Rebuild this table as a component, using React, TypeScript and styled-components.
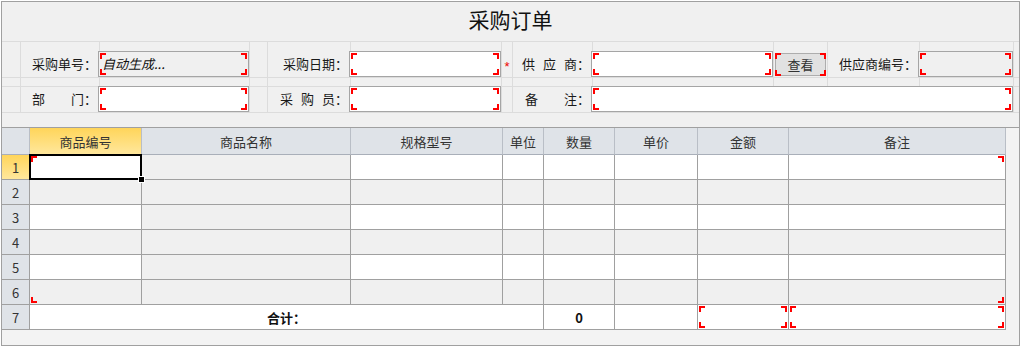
import React from 'react'
import styled, { createGlobalStyle, css } from 'styled-components'

const GlobalStyle = createGlobalStyle`
  html, body { margin: 0; padding: 0; background: #fff; }
  body {
    font-family: "Noto Sans CJK SC", "Liberation Sans", sans-serif;
    font-size: 13px;
    color: #1a1a1a;
  }
  * { box-sizing: border-box; }
`

type Corner = 'tl' | 'tr' | 'bl' | 'br'
const ALL: Corner[] = ['tl', 'tr', 'bl', 'br']
const RED = 'linear-gradient(#f00, #f00)'

// red "required" brackets drawn as background layers
const brackets = (list: Corner[], inset: number, arm: number) =>
  list.flatMap(c => {
    const at = `${c[1] === 'l' ? 'left' : 'right'} ${inset}px ${c[0] === 't' ? 'top' : 'bottom'} ${inset}px`
    return [`${RED} ${at} / ${arm}px 2px no-repeat`, `${RED} ${at} / 2px ${arm}px no-repeat`]
  })

const paint = (bg: string, list?: Corner[], inset = 1, arm = 6) =>
  [...(list ? brackets(list, inset, arm) : []), bg].join(', ')

const Panel = styled.div`
  margin: 1px 0 0 1px;
  width: 1019px;
  height: 345px;
  border: 1px solid #a0a0a0;
  background: #f0f0f0;
  display: flex;
  flex-direction: column;
`

const Title = styled.h1`
  margin: 0;
  height: 39px;
  line-height: 35px;
  text-align: center;
  font-size: 21px;
  font-weight: normal;
  color: #111;
`

/* ---------- header form ---------- */

const FormGrid = styled.div`
  display: grid;
  grid-template-columns: 18px 79px 150px 18px 83px 151px 11px 80px 181px 54px 92px 94px 1fr;
  grid-template-rows: 36px 9px 27px;
  margin-bottom: 14px;
`

const Cell = styled.div<{ $first?: boolean; $last?: boolean; $span?: number }>`
  display: flex;
  align-items: flex-end;
  justify-content: flex-end;
  min-width: 0;
  grid-column: span ${p => p.$span ?? 1};
  border-top: 1px solid #dcdcdc;
  border-left: ${p => (p.$first ? 'none' : '1px solid #dcdcdc')};
  border-bottom: ${p => (p.$last ? '1px solid #dcdcdc' : 'none')};
`

const Label = styled.span`
  width: 100%;
  height: 26px;
  line-height: 26px;
  padding-right: 2px;
  text-align: right;
  white-space: nowrap;
  color: #1a1a1a;
`

const Spread = styled.span`
  letter-spacing: 8px;
`

const Field = styled.div<{ $readOnly?: boolean }>`
  position: relative;
  z-index: 1;
  flex: none;
  width: calc(100% + 2px);
  margin-left: -1px;
  height: 26px;
  padding: 0 3px;
  line-height: 24px;
  border: 1px solid #a5a5a5;
  background: ${p => paint(p.$readOnly ? '#f0f0f0' : '#fff', ALL)};
`

const Hint = styled.span`
  font-style: italic;
  color: #111;
`

const Required = styled.span`
  width: 100%;
  margin-bottom: 4px;
  text-align: center;
  color: #e00;
  font: 13px/13px "Liberation Sans", sans-serif;
`

const LookupButton = styled.button`
  position: relative;
  flex: none;
  width: 51px;
  height: 23px;
  margin: 0 1px 1px 0;
  padding: 0;
  border: 1px solid #adadad;
  background: #e1e1e1;
  font: inherit;
  line-height: 21px;
  color: #333;
  &::after {
    content: '';
    position: absolute;
    inset: -1px;
    background: ${paint('transparent', ALL, 0)};
  }
`

const blankRow = (key: string, last = false) =>
  Array.from({ length: 13 }, (_, i) => <Cell key={`${key}${i}`} $first={i === 0} $last={last} />)

const OrderForm: React.FC = () => (
  <FormGrid>
    <Cell $first />
    <Cell><Label>采购单号：</Label></Cell>
    <Cell><Field $readOnly><Hint>自动生成...</Hint></Field></Cell>
    <Cell />
    <Cell><Label>采购日期：</Label></Cell>
    <Cell><Field /></Cell>
    <Cell><Required>*</Required></Cell>
    <Cell><Label><Spread>供应</Spread>商：</Label></Cell>
    <Cell><Field /></Cell>
    <Cell><LookupButton>查看</LookupButton></Cell>
    <Cell><Label>供应商编号：</Label></Cell>
    <Cell><Field $readOnly /></Cell>
    <Cell />

    {blankRow('gap')}

    <Cell $first $last />
    <Cell $last><Label>部　　门：</Label></Cell>
    <Cell $last><Field /></Cell>
    <Cell $last />
    <Cell $last><Label><Spread>采购</Spread>员：</Label></Cell>
    <Cell $last><Field /></Cell>
    <Cell $last />
    <Cell $last><Label>备　　注：</Label></Cell>
    <Cell $last $span={4}><Field /></Cell>
    <Cell $last />
  </FormGrid>
)

/* ---------- goods sheet ---------- */

const Sheet = styled.div`
  flex: 1;
  border-top: 1px solid #a0a0a0;
  background: #f3f3f3;
`

const SheetGrid = styled.div`
  display: grid;
  grid-template-columns: 28px 112px 209px 152px 41px 71px 83px 91px 217px;
  grid-template-rows: 27px repeat(7, 25px);
  width: max-content;
`

const ACTIVE = 'linear-gradient(#ffd55a, #ffe79c)'

const HeadCell = styled.div<{ $active?: boolean }>`
  display: flex;
  align-items: center;
  justify-content: center;
  border-right: 1px solid #b9bec6;
  border-bottom: 1px solid #a9afb9;
  background: ${p => (p.$active ? ACTIVE : '#dfe3e8')};
  color: #333;
`

const RowHead = styled.div<{ $active?: boolean }>`
  display: flex;
  align-items: center;
  justify-content: center;
  border-right: 1px solid #a0a0a0;
  border-bottom: 1px solid #a0a0a0;
  background: ${p => (p.$active ? ACTIVE : '#dfe3e8')};
  color: #333;
`

const DataCell = styled.div<{ $bg: string; $corners?: Corner[]; $span?: number; $bold?: boolean; $selected?: boolean }>`
  position: relative;
  display: flex;
  align-items: center;
  justify-content: center;
  grid-column: span ${p => p.$span ?? 1};
  border-right: 1px solid #a0a0a0;
  border-bottom: 1px solid #a0a0a0;
  background: ${p => paint(p.$bg, p.$corners)};
  font-weight: ${p => (p.$bold ? 'bold' : 'normal')};
  color: #111;
  ${p =>
    p.$selected &&
    css`
      z-index: 2;
      &::before {
        content: '';
        position: absolute;
        inset: -1px;
        border: 2px solid #000;
      }
      &::after {
        content: '';
        position: absolute;
        right: -3px;
        bottom: -3px;
        width: 5px;
        height: 5px;
        background: #000;
        box-shadow: 0 0 0 1px #fff;
      }
    `}
`

const columns = ['商品编号', '商品名称', '规格型号', '单位', '数量', '单价', '金额', '备注']

const cornerOf = (row: number, col: number): Corner[] | undefined => {
  if (col === 0 && row === 1) return ['tl']
  if (col === 7 && row === 1) return ['tr']
  if (col === 0 && row === 6) return ['bl']
  if (col === 7 && row === 6) return ['br']
  return undefined
}

const GoodsSheet: React.FC = () => (
  <Sheet>
    <SheetGrid>
      <HeadCell />
      {columns.map((c, i) => (
        <HeadCell key={c + i} $active={i === 0}>{c}</HeadCell>
      ))}

      {[1, 2, 3, 4, 5, 6].map(r => (
        <React.Fragment key={r}>
          <RowHead $active={r === 1}>{r}</RowHead>
          {columns.map((_, c) => (
            <DataCell
              key={c}
              $bg={c === 1 || r % 2 === 0 ? '#f0f0f0' : '#fff'}
              $corners={cornerOf(r, c)}
              $selected={r === 1 && c === 0}
            />
          ))}
        </React.Fragment>
      ))}

      <RowHead>7</RowHead>
      <DataCell $bg="#fff" $span={4} $bold>合计：</DataCell>
      <DataCell $bg="#fff" $bold>0</DataCell>
      <DataCell $bg="#fff" />
      <DataCell $bg="#fff" $corners={ALL} />
      <DataCell $bg="#fff" $corners={ALL} />
    </SheetGrid>
  </Sheet>
)

const App: React.FC = () => (
  <>
    <GlobalStyle />
    <Panel>
      <Title>采购订单</Title>
      <OrderForm />
      <GoodsSheet />
    </Panel>
  </>
)

export default App
